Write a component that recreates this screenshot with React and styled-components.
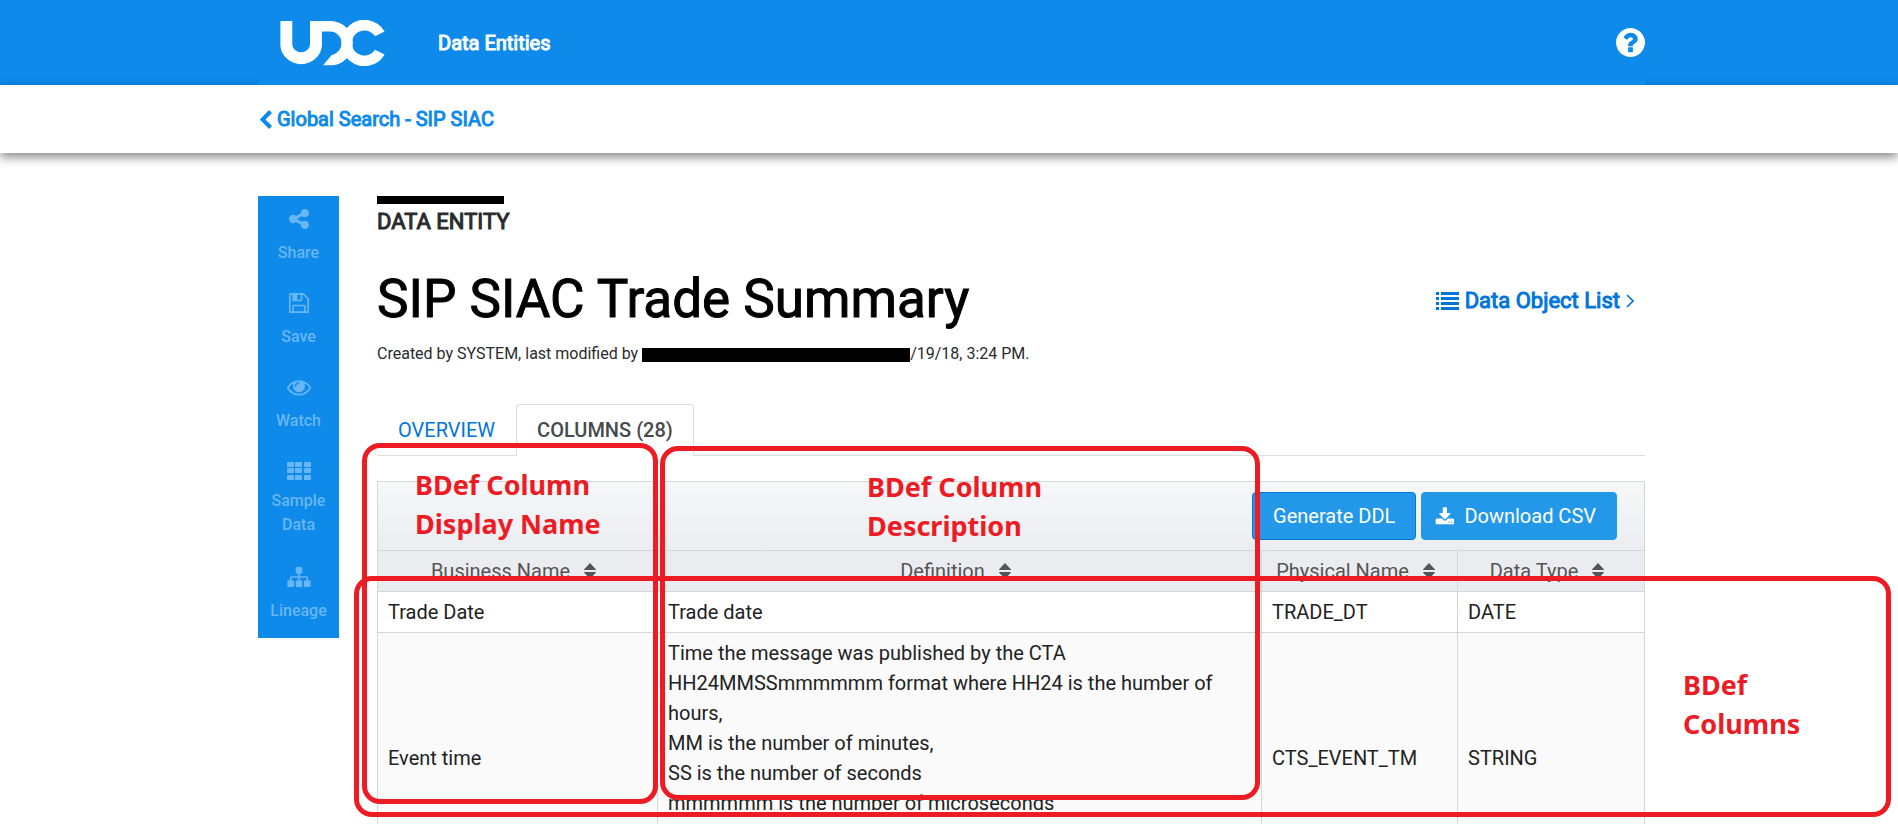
import React from "react";
import styled, { createGlobalStyle, css } from "styled-components";

const BLUE = "#0d8aea";
const LINK = "#0275d8";
const LINE = "#d5d6d8";
const RED = "#ed1c24";

const GlobalStyle = createGlobalStyle`
  *, *::before, *::after { box-sizing: border-box; }
  body {
    margin: 0;
    overflow: hidden;
    background: #fff;
    color: #292b2c;
    font-family: Roboto, "Liberation Sans", sans-serif;
    font-size: 20px;
    line-height: 30px;
  }
  a { color: inherit; text-decoration: none; }
  button { font: inherit; cursor: pointer; }
`;

const strong = css`
  font-weight: 400;
  -webkit-text-stroke: 1px currentColor;
`;

const Page = styled.div`
  position: relative;
  height: 100vh;
  overflow: hidden;
`;

const Container = styled.div`
  max-width: 1392px;
  margin: 0 auto;
  padding-left: 5px;
`;

const Header = styled.header`
  background: ${BLUE};
`;

const HeaderInner = styled(Container)`
  position: relative;
  z-index: 2;
  height: 85px;
`;

const HeaderFill = styled.div`
  display: flex;
  align-items: center;
  height: 100%;
  padding-left: 22px;
  background: ${BLUE};
`;

const NavLink = styled.a`
  flex: 1;
  margin-left: 53px;
  color: #fff;
  ${strong}
`;

const IconButton = styled.button`
  display: flex;
  padding: 0;
  border: 0;
  background: none;
  color: #fff;
`;

const SubBar = styled.nav`
  position: relative;
  z-index: 1;
  background: #fff;
  box-shadow: 0 4px 10px rgba(0, 0, 0, 0.48);
`;

const SubBarInner = styled(Container)`
  display: flex;
  align-items: center;
  height: 68px;
`;

const BackLink = styled.a`
  display: flex;
  align-items: center;
  gap: 5px;
  padding-left: 1px;
  color: ${BLUE};
  ${strong}
`;

const Body = styled(Container)`
  display: flex;
  align-items: flex-start;
  gap: 38px;
  padding-top: 43px;
`;

const Sidebar = styled.aside`
  flex: none;
  width: 81px;
  background: ${BLUE};
`;

const SideButton = styled.button`
  display: flex;
  flex-direction: column;
  align-items: center;
  gap: ${(p) => (p.$tight ? 8 : 12)}px;
  width: 100%;
  padding: 13px 8px ${(p) => (p.$tight ? 17 : 15)}px;
  border: 0;
  background: none;
  color: #68b6f3;
  font-size: 16px;
  font-weight: 500;
  line-height: 24px;
`;

const Main = styled.main`
  flex: 1;
  min-width: 0;
`;

const Redaction = styled.span`
  display: ${(p) => (p.$inline ? "inline-block" : "block")};
  width: ${(p) => p.$width}px;
  height: ${(p) => p.$height}px;
  background: #000;
  vertical-align: middle;
`;

const Kicker = styled.p`
  margin: 6px 0 35px;
  font-size: 22px;
  line-height: 24px;
  ${strong}
`;

const TitleRow = styled.div`
  display: flex;
  align-items: center;
  justify-content: space-between;
  padding-right: 11px;
`;

const Title = styled.h1`
  margin: 0;
  color: #000;
  font-size: 53px;
  line-height: 60px;
  ${strong}
`;

const ListLink = styled.a`
  display: flex;
  align-items: center;
  gap: 6px;
  padding-top: 4px;
  color: ${LINK};
  font-size: 22px;
  ${strong}
`;

const Meta = styled.p`
  margin: 13px 0 38px;
  font-size: 16px;
  line-height: 24px;
`;

const Tabs = styled.div`
  display: flex;
  height: 52px;
  margin-bottom: 25px;
  border-bottom: 1px solid #ddd;
`;

const Tab = styled.button`
  height: 52px;
  padding: 0 20px;
  border: 1px solid transparent;
  border-radius: 4px 4px 0 0;
  background: none;
  color: ${LINK};
  ${(p) =>
    p.$active &&
    css`
      border-color: #ddd #ddd #fff;
      background: #fff;
      color: #464a4c;
      font-weight: 500;
    `}
`;

const Toolbar = styled.div`
  display: flex;
  align-items: center;
  justify-content: flex-end;
  gap: 5px;
  height: 69px;
  padding-right: 27px;
  border: 1px solid ${LINE};
  border-bottom: 0;
  background: linear-gradient(#f6f7f9, #ebedf0);
`;

const ActionButton = styled.button`
  display: flex;
  align-items: center;
  gap: 10px;
  height: 48px;
  padding: 0 20px 0 ${(p) => (p.$icon ? 13 : 20)}px;
  border: 1px solid ${(p) => (p.$icon ? "#2398e8" : LINK)};
  border-radius: 4px;
  background: #2398e8;
  color: #fff;
`;

const Table = styled.table`
  width: 100%;
  border-collapse: collapse;
  table-layout: fixed;
`;

const Col = styled.col`
  width: ${(p) => (p.$width ? `${p.$width}px` : "auto")};
`;

const HeadCell = styled.th`
  height: 41px;
  padding: 0;
  border: 1px solid ${LINE};
  background: #ebecf0;
  color: #555;
  font-weight: 400;
`;

const SortButton = styled.button`
  display: inline-flex;
  align-items: center;
  gap: 14px;
  padding: 0 8px 0 0;
  border: 0;
  background: none;
  color: inherit;
`;

const Row = styled.tr`
  height: ${(p) => p.$height}px;
  background: ${(p) => (p.$odd ? "#fafafa" : "#fff")};
`;

const Cell = styled.td`
  padding: 5px 10px;
  border: 1px solid ${LINE};
  color: #222;
  vertical-align: ${(p) => (p.$top ? "top" : "middle")};
  white-space: pre-line;
`;

const Marker = styled.div`
  position: absolute;
  z-index: 3;
  top: ${(p) => p.$y}px;
  left: ${(p) => p.$x}px;
  width: ${(p) => p.$w}px;
  height: ${(p) => p.$h}px;
  border: 5px solid ${RED};
  border-radius: 18px;
  pointer-events: none;
`;

const MarkerLabel = styled.p`
  position: absolute;
  z-index: 3;
  top: ${(p) => p.$y}px;
  left: ${(p) => p.$x}px;
  margin: 0;
  color: ${RED};
  font: 700 27px/39px "Noto Sans", "Open Sans", sans-serif;
  white-space: pre;
  pointer-events: none;
`;

const PATHS = {
  share:
    "M1344 1024q133 0 226.5 93.5t93.5 226.5-93.5 226.5-226.5 93.5-226.5-93.5-93.5-226.5q0-12 2-34l-360-180q-92 86-218 86-133 0-226.5-93.5t-93.5-226.5 93.5-226.5 226.5-93.5q126 0 218 86l360-180q-2-22-2-34 0-133 93.5-226.5t226.5-93.5 226.5 93.5 93.5 226.5-93.5 226.5-226.5 93.5q-126 0-218-86l-360 180q2 22 2 34t-2 34l360 180q92-86 218-86z",
  save:
    "M512 1536h768v-384h-768v384zm896 0h128v-896q0-14-10-38.5t-20-34.5l-281-281q-10-10-34-20t-39-10v416q0 40-28 68t-68 28h-576q-40 0-68-28t-28-68v-416h-128v1280h128v-416q0-40 28-68t68-28h832q40 0 68 28t28 68v416zm-384-928v-320q0-13-9.5-22.5t-22.5-9.5h-192q-13 0-22.5 9.5t-9.5 22.5v320q0 13 9.5 22.5t22.5 9.5h192q13 0 22.5-9.5t9.5-22.5zm640 32v928q0 40-28 68t-68 28h-1344q-40 0-68-28t-28-68v-1344q0-40 28-68t68-28h928q40 0 88 20t76 48l280 280q28 28 48 76t20 88z",
  eye:
    "M1664 960q-152-236-381-353 61 104 61 225 0 185-131.5 316.5t-316.5 131.5-316.5-131.5-131.5-316.5q0-121 61-225-229 117-381 353 133 205 333.5 326.5t434.5 121.5 434.5-121.5 333.5-326.5zm-720-384q0-20-14-34t-34-14q-125 0-214.5 89.5t-89.5 214.5q0 20 14 34t34 14 34-14 14-34q0-86 61-147t147-61q20 0 34-14t14-34zm848 384q0 34-20 69-140 230-376.5 368.5t-499.5 138.5-499.5-139-376.5-368q-20-35-20-69t20-69q140-229 376.5-368t499.5-139 499.5 139 376.5 368q20 35 20 69z",
  sitemap:
    "M1792 1248v320q0 40-28 68t-68 28h-320q-40 0-68-28t-28-68v-320q0-40 28-68t68-28h96v-192h-512v192h96q40 0 68 28t28 68v320q0 40-28 68t-68 28h-320q-40 0-68-28t-28-68v-320q0-40 28-68t68-28h96v-192h-512v192h96q40 0 68 28t28 68v320q0 40-28 68t-68 28h-320q-40 0-68-28t-28-68v-320q0-40 28-68t68-28h96v-192q0-52 38-90t90-38h512v-192h-96q-40 0-68-28t-28-68v-320q0-40 28-68t68-28h320q40 0 68 28t28 68v320q0 40-28 68t-68 28h-96v192h512q52 0 90 38t38 90v192h96q40 0 68 28t28 68z",
  help:
    "M1024 1376v-192q0-14-9-23t-23-9h-192q-14 0-23 9t-9 23v192q0 14 9 23t23 9h192q14 0 23-9t9-23zm256-672q0-88-55.5-163t-138.5-116-170-41q-243 0-371 213-15 24 8 42l132 100q7 6 19 6 16 0 25-12 53-68 86-92 34-24 86-24 48 0 85.5 26t37.5 59q0 38-20 61t-68 45q-63 28-115.5 86.5t-52.5 125.5v36q0 14 9 23t23 9h192q14 0 23-9t9-23q0-19 21.5-49.5t54.5-49.5q32-18 49-28.5t46-35 44.5-48 28-60.5 12.5-81zm384 192q0 209-103 385.5t-279.5 279.5-385.5 103-385.5-103-279.5-279.5-103-385.5 103-385.5 279.5-279.5 385.5-103 385.5 103 279.5 279.5 103 385.5z",
  download:
    "M1344 1344q0-26-19-45t-45-19-45 19-19 45 19 45 45 19 45-19 19-45zm256 0q0-26-19-45t-45-19-45 19-19 45 19 45 45 19 45-19 19-45zm128-224v320q0 40-28 68t-68 28h-1472q-40 0-68-28t-28-68v-320q0-40 28-68t68-28h465l135 136q58 56 136 56t136-56l136-136h464q40 0 68 28t28 68zm-325-569q17 41-14 70l-448 448q-18 19-45 19t-45-19l-448-448q-31-29-14-70 17-39 59-39h256v-448q0-26 19-45t45-19h256q26 0 45 19t19 45v448h256q42 0 59 39z",
  back:
    "M1427 301l-531 531 531 531q19 19 19 45t-19 45l-166 166q-19 19-45 19t-45-19l-742-742q-19-19-19-45t19-45l742-742q19-19 45-19t45 19l166 166q19 19 19 45t-19 45z",
};

const Icon = ({ name, width, height = width, box = "0 0 1792 1792" }) => (
  <svg width={width} height={height} viewBox={box} fill="currentColor" aria-hidden="true">
    <path d={PATHS[name]} />
  </svg>
);

const GridIcon = () => (
  <svg width="24" height="20" viewBox="0 0 24 20" fill="currentColor" aria-hidden="true">
    {[1, 7, 14].map((y) =>
      [0, 8, 17].map((x) => <rect key={`${x}-${y}`} x={x} y={y} width="7" height="5" rx="1" />)
    )}
  </svg>
);

const ListIcon = () => (
  <svg width="23" height="18" viewBox="0 0 23 18" fill="currentColor" aria-hidden="true">
    {[0, 5, 10, 15].map((y) => (
      <React.Fragment key={y}>
        <rect x="0" y={y} width="3" height="3" />
        <rect x="5" y={y} width="18" height="3" />
      </React.Fragment>
    ))}
  </svg>
);

const AngleIcon = () => (
  <svg width="8" height="14" viewBox="0 0 8 14" fill="none" stroke="currentColor" strokeWidth="1.6" aria-hidden="true">
    <path d="M1 1l6 6-6 6" />
  </svg>
);

const SortIcon = () => (
  <svg width="12" height="16" viewBox="0 0 12 16" fill="currentColor" aria-hidden="true">
    <path d="M6 0L12 6.4Q12 7 11.4 7H0.6Q0 7 0 6.4ZM6 16L12 9.6Q12 9 11.4 9H0.6Q0 9 0 9.6Z" />
  </svg>
);

const Logo = () => (
  <svg width="105" height="46" viewBox="120 57 315 139" fill="#fff" role="img" aria-label="UDC">
    <path d="M138 60V134A45 43 0 0 0 227.500 134V60" fill="none" stroke="#fff" strokeWidth="36" />
    <path d="M227 60H272A67 67 0 0 1 272 194H249L275 163C290 160 305 145 305 127A35 35 0 0 0 270 92H227Z" />
    <path d="M435 92A70 70 0 1 0 435 161L406 147A38 38 0 1 1 406 106Z" />
  </svg>
);

const SIDE_ITEMS = [
  { label: "Share", icon: <Icon name="share" width={20} box="128 128 1536 1536" /> },
  { label: "Save", icon: <Icon name="save" width={20} box="128 128 1536 1536" /> },
  { label: "Watch", icon: <Icon name="eye" width={24} height={20} box="0 150 1792 1493" /> },
  { label: "Sample Data", icon: <GridIcon />, tight: true },
  { label: "Lineage", icon: <Icon name="sitemap" width={24} height={20} box="0 128 1792 1536" /> },
];

const COLUMNS = [
  { label: "Business Name", width: 280 },
  { label: "Definition" },
  { label: "Physical Name", width: 196 },
  { label: "Data Type", width: 187 },
];

const ROWS = [
  { name: "Trade Date", definition: "Trade date", physical: "TRADE_DT", type: "DATE", height: 41 },
  {
    name: "Event time",
    definition:
      "Time the message was published by the CTA\nHH24MMSSmmmmmm format where HH24 is the humber of hours,\nMM is the number of minutes,\nSS is the number of seconds\nmmmmmm is the number of microseconds",
    physical: "CTS_EVENT_TM",
    type: "STRING",
    height: 251,
  },
];

export default function App() {
  return (
    <Page>
      <GlobalStyle />
      <Header>
        <HeaderInner>
          <HeaderFill>
            <Logo />
            <NavLink href="#entities">Data Entities</NavLink>
            <IconButton aria-label="Help">
              <Icon name="help" width={29} box="128 128 1536 1536" />
            </IconButton>
          </HeaderFill>
        </HeaderInner>
      </Header>
      <SubBar>
        <SubBarInner>
          <BackLink href="#search">
            <Icon name="back" width={13} height={19} box="330 0 1130 1664" />
            Global Search - SIP SIAC
          </BackLink>
        </SubBarInner>
      </SubBar>

      <Body>
        <Sidebar>
          {SIDE_ITEMS.map((item) => (
            <SideButton key={item.label} $tight={item.tight}>
              {item.icon}
              <span>{item.label}</span>
            </SideButton>
          ))}
        </Sidebar>
        <Main>
          <Redaction $width={127} $height={8} />
          <Kicker>DATA ENTITY</Kicker>
          <TitleRow>
            <Title>SIP SIAC Trade Summary</Title>
            <ListLink href="#objects">
              <ListIcon />
              Data Object List
              <AngleIcon />
            </ListLink>
          </TitleRow>
          <Meta>
            Created by SYSTEM, last modified by{" "}
            <Redaction $inline $width={268} $height={14} />
            /19/18, 3:24 PM.
          </Meta>
          <Tabs role="tablist">
            <Tab role="tab">OVERVIEW</Tab>
            <Tab role="tab" aria-selected="true" $active>
              COLUMNS (28)
            </Tab>
          </Tabs>
          <Toolbar>
            <ActionButton>Generate DDL</ActionButton>
            <ActionButton $icon>
              <Icon name="download" width={19} height={19} box="0 0 1728 1664" />
              Download CSV
            </ActionButton>
          </Toolbar>
          <Table>
            <colgroup>
              {COLUMNS.map((c) => (
                <Col key={c.label} $width={c.width} />
              ))}
            </colgroup>
            <thead>
              <tr>
                {COLUMNS.map((c) => (
                  <HeadCell key={c.label} scope="col">
                    <SortButton>
                      {c.label}
                      <SortIcon />
                    </SortButton>
                  </HeadCell>
                ))}
              </tr>
            </thead>
            <tbody>
              {ROWS.map((r, i) => (
                <Row key={r.name} $height={r.height} $odd={i % 2 === 1}>
                  <Cell>{r.name}</Cell>
                  <Cell $top>{r.definition}</Cell>
                  <Cell>{r.physical}</Cell>
                  <Cell>{r.type}</Cell>
                </Row>
              ))}
            </tbody>
          </Table>
        </Main>
      </Body>

      <Marker $x={362} $y={443} $w={296} $h={361} />
      <Marker $x={660} $y={446} $w={600} $h={354} />
      <Marker $x={354} $y={576} $w={1537} $h={241} />
      <MarkerLabel $x={415} $y={465}>{"BDef Column\nDisplay Name"}</MarkerLabel>
      <MarkerLabel $x={867} $y={467}>{"BDef Column\nDescription"}</MarkerLabel>
      <MarkerLabel $x={1683} $y={665}>{"BDef\nColumns"}</MarkerLabel>
    </Page>
  );
}
